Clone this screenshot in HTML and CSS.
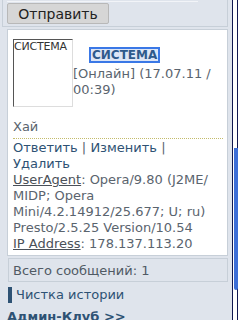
FILE: index.html
```html
<!DOCTYPE html>
<html lang="ru">

<head>
    <meta charset="UTF-8">
    <meta name="viewport" content="width=device-width, initial-scale=1.0">
    <title>Чат</title>
    <link rel="stylesheet" href="styles.css">
</head>

<body>
    <div class="page">
        <div class="main">
            <div class="box form-box">
                <div class="field"></div>
                <button class="send-btn">Отправить</button>
            </div>

            <div class="box post">
                <div class="post-head">
                    <span class="avatar">СИСТЕМА</span>
                    <div class="author">
                        <div class="nick-row"><a class="nick" href="#">СИСТЕМА</a></div>
                        [Онлайн] (17.07.11 /<br>
                        00:39)
                    </div>
                </div>
                <div class="post-text">Хай</div>
                <div class="post-info">
                    <a href="#">Ответить</a> | <a href="#">Изменить</a> |<br>
                    <a href="#">Удалить</a><br>
                    <span class="label">UserAgent</span>: Opera/9.80 (J2ME/<br>
                    MIDP; Opera<br>
                    Mini/4.2.14912/25.677; U; ru)<br>
                    Presto/2.5.25 Version/10.54<br>
                    <span class="label">IP Address</span>: 178.137.113.20
                </div>
            </div>

            <div class="box total">Всего сообщений: 1</div>

            <div class="menu-item"><a href="#">Чистка истории</a></div>
            <div class="club"><a href="#">Админ-Клуб &gt;&gt;</a></div>
        </div>

        <div class="scrollbar">
            <div class="thumb"></div>
        </div>
    </div>
</body>

</html>
```

FILE: styles.css
```css
* {
    margin: 0;
    padding: 0;
    box-sizing: border-box;
}

body {
    background: #dfe4ec;
    font-family: 'DejaVu Sans', sans-serif;
    font-size: 13px;
    line-height: 16px;
    color: #5a646e;
    height: 320px;
    overflow: hidden;
}

a {
    color: #2e5274;
    text-decoration: none;
}

.page {
    display: flex;
    height: 320px;
}

.main {
    flex: 1;
    padding: 0 4px 0 7px;
}

.scrollbar {
    width: 8px;
    background: #fff;
    border-left: 1px solid #101850;
    border-right: 2px solid #fff;
    position: relative;
}

.scrollbar::after {
    content: '';
    position: absolute;
    top: 0;
    bottom: 0;
    left: 4px;
    width: 1px;
    background: #101850;
}

.thumb {
    position: absolute;
    top: 148px;
    left: 1px;
    width: 4px;
    height: 142px;
    background: #3c6ed6;
    border-radius: 0 0 2px 2px;
    z-index: 1;
}

.box {
    border: 1px solid #c7cfd8;
}

.form-box {
    border-top: none;
    padding: 0 0 2px 0;
    margin-left: -5px;
    display: flex;
    flex-direction: column;
    align-items: flex-start;
}

.field {
    width: 191px;
    height: 2px;
    border-bottom: 1px solid #f2f4f8;
    margin-left: 4px;
}

.send-btn {
    margin: 1px 0 0 4px;
    width: 102px;
    height: 21px;
    background: #d6d6d6;
    border: 1px solid #b8b8b8;
    border-radius: 2px;
    font-family: 'DejaVu Sans', sans-serif;
    font-size: 14px;
    color: #222;
}

.post {
    background: #fff;
    margin-top: 2px;
    padding: 9px 4px 3px 5px;
    white-space: nowrap;
}

.post-head {
    overflow: hidden;
}

.avatar {
    float: left;
    width: 60px;
    height: 68px;
    border: 1px solid #ddd;
    border-left-color: #555;
    border-top-color: #555;
    font-size: 11px;
    line-height: 13px;
    color: #333;
    letter-spacing: -0.2px;
}

.author {
    overflow: hidden;
}

.nick-row {
    display: flex;
    padding: 8px 0 3px 16px;
}

.nick {
    height: 16px;
    padding: 0 1px;
    line-height: 12px;
    border: 2px solid #3a78e6;
    background: #dde6f6;
    color: #2e5a8c;
    font-weight: bold;
    font-size: 12px;
}

.post-text {
    margin-top: 12px;
    padding-bottom: 3px;
    border-bottom: 1px dotted #c4bc6c;
}

.post-info {
    padding-top: 1px;
}

.label {
    color: #4a5058;
    text-decoration: underline;
}

.total {
    margin: 2px 0 0 1px;
    padding: 4px 4px 2px;
    color: #505a64;
}

.menu-item {
    margin: 5px 0 0 1px;
    padding-left: 4px;
    border-left: 4px solid #2e5274;
}

.club {
    margin-top: 6px;
    font-weight: bold;
}
```
